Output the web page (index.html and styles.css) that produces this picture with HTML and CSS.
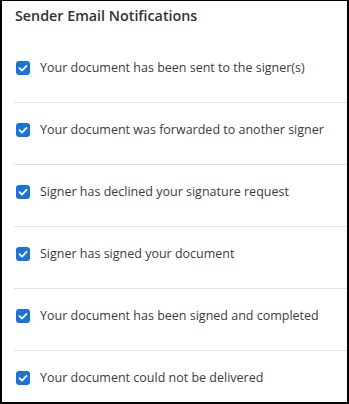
FILE: index.html
```html
<!DOCTYPE html>
<html>
<head>
    <title>Sender Email Notifications</title>
    <link rel="stylesheet" href="styles.css">
</head>
<body>
    <div class="panel">
        <h2 class="panel-title">Sender Email Notifications</h2>
        <ul class="notify-list">
            <li class="notify-row">
                <span class="check"><svg viewBox="0 0 14 14"><path d="M3.5 7.2 L6 9.6 L10.5 4.8"/></svg></span>
                <span class="label">Your document has been sent to the signer(s)</span>
            </li>
            <li class="notify-row">
                <span class="check"><svg viewBox="0 0 14 14"><path d="M3.5 7.2 L6 9.6 L10.5 4.8"/></svg></span>
                <span class="label">Your document was forwarded to another signer</span>
            </li>
            <li class="notify-row">
                <span class="check"><svg viewBox="0 0 14 14"><path d="M3.5 7.2 L6 9.6 L10.5 4.8"/></svg></span>
                <span class="label">Signer has declined your signature request</span>
            </li>
            <li class="notify-row">
                <span class="check"><svg viewBox="0 0 14 14"><path d="M3.5 7.2 L6 9.6 L10.5 4.8"/></svg></span>
                <span class="label">Signer has signed your document</span>
            </li>
            <li class="notify-row">
                <span class="check"><svg viewBox="0 0 14 14"><path d="M3.5 7.2 L6 9.6 L10.5 4.8"/></svg></span>
                <span class="label">Your document has been signed and completed</span>
            </li>
            <li class="notify-row">
                <span class="check"><svg viewBox="0 0 14 14"><path d="M3.5 7.2 L6 9.6 L10.5 4.8"/></svg></span>
                <span class="label">Your document could not be delivered</span>
            </li>
        </ul>
    </div>
</body>
</html>
```

FILE: styles.css
```css
html, body {
    margin: 0;
    padding: 0;
    background: #fff;
}
.panel {
    box-sizing: border-box;
    width: 349px;
    height: 404px;
    border: 2px solid #000;
    border-top-width: 1px;
    padding-left: 12px;
    font-family: "Open Sans", "Liberation Sans", sans-serif;
    overflow: hidden;
}
.panel-title {
    margin: 0;
    padding: 5px 0 0 1px;
    font-size: 14.3px;
    line-height: 20px;
    font-weight: 600;
    color: #333;
}
.notify-list {
    list-style: none;
    margin: 0;
    padding: 33px 0 0;
}
.notify-row {
    display: flex;
    align-items: center;
    gap: 10px;
    padding: 18px 0 25px 2px;
    line-height: 18px;
    font-size: 12.5px;
    color: #3c3c3c;
}
.notify-row:first-child {
    padding-top: 0;
}
.notify-row + .notify-row {
    border-top: 1px solid #e2e2e2;
}
.check {
    flex: none;
    width: 14px;
    height: 14px;
    border-radius: 3px;
    background: #1a73d9;
    display: flex;
}
.check svg {
    width: 14px;
    height: 14px;
    fill: none;
    stroke: #fff;
    stroke-width: 1.8;
    stroke-linecap: round;
    stroke-linejoin: round;
}
```
